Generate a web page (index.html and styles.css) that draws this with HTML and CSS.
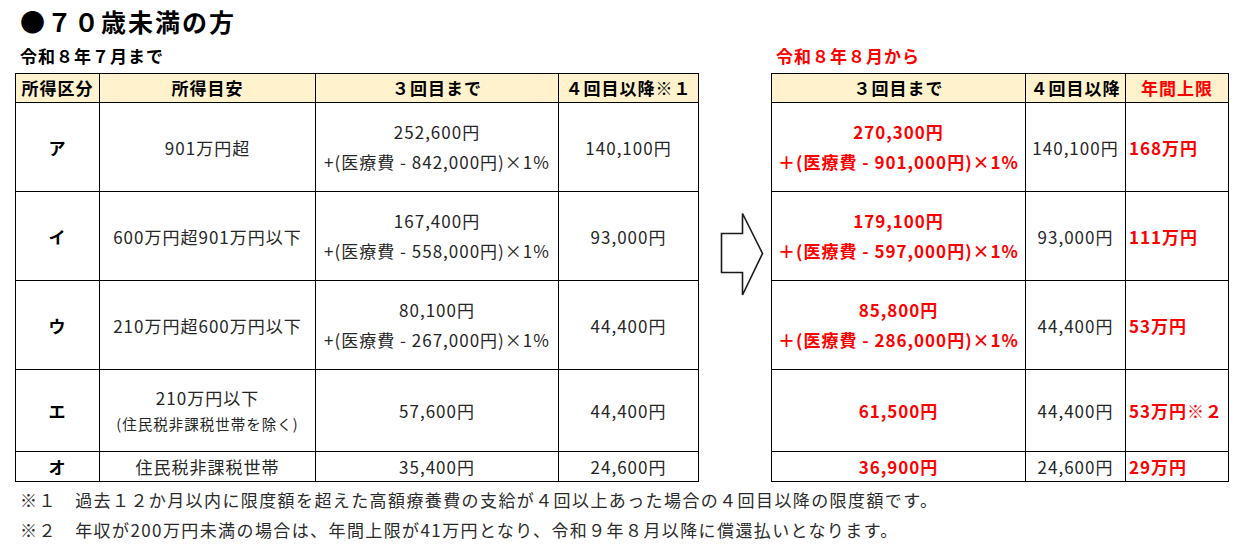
FILE: index.html
```html
<!DOCTYPE html>
<html lang="ja">
<head>
<meta charset="utf-8">
<link rel="stylesheet" href="styles.css">
</head>
<body>
<div class="page">
  <h1 class="title">●７０歳未満の方</h1>
  <div class="compare">
    <section class="block">
      <h2 class="sub">令和８年７月まで</h2>
      <table class="grid left">
        <colgroup><col class="c1"><col class="c2"><col class="c3"><col class="c4"></colgroup>
        <tr class="head"><th>所得区分</th><th>所得目安</th><th>３回目まで</th><th>４回目以降※１</th></tr>
        <tr class="r3"><th>ア</th><td>901万円超</td><td><div class="l2">252,600円</div><div class="l2">+(医療費 - 842,000円)×1%</div></td><td>140,100円</td></tr>
        <tr class="r3"><th>イ</th><td>600万円超901万円以下</td><td><div class="l2">167,400円</div><div class="l2">+(医療費 - 558,000円)×1%</div></td><td>93,000円</td></tr>
        <tr class="r3"><th>ウ</th><td>210万円超600万円以下</td><td><div class="l2">80,100円</div><div class="l2">+(医療費 - 267,000円)×1%</div></td><td>44,400円</td></tr>
        <tr class="r4"><th>エ</th><td><div class="l3">210万円以下</div><div class="l3 small">(住民税非課税世帯を除く)</div></td><td>57,600円</td><td>44,400円</td></tr>
        <tr class="r5"><th>オ</th><td>住民税非課税世帯</td><td>35,400円</td><td>24,600円</td></tr>
      </table>
    </section>
    <div class="arrow">
      <svg width="44" height="85" viewBox="0 0 44 85"><path d="M1.5 21.5 H22.5 V1.5 L42.5 41.5 L22.5 83 V60.5 H1.5 Z" fill="#fff" stroke="#1a1a1a" stroke-width="1.6" stroke-linejoin="miter"/></svg>
    </div>
    <section class="block">
      <h2 class="sub red">令和８年８月から</h2>
      <table class="grid right">
        <colgroup><col class="d1"><col class="d2"><col class="d3"></colgroup>
        <tr class="head"><th>３回目まで</th><th>４回目以降</th><th class="red">年間上限</th></tr>
        <tr class="r3"><td class="rv"><div class="l2">270,300円</div><div class="l2">＋(医療費 - 901,000円)×1%</div></td><td>140,100円</td><td class="cap">168万円</td></tr>
        <tr class="r3"><td class="rv"><div class="l2">179,100円</div><div class="l2">＋(医療費 - 597,000円)×1%</div></td><td>93,000円</td><td class="cap">111万円</td></tr>
        <tr class="r3"><td class="rv"><div class="l2">85,800円</div><div class="l2">＋(医療費 - 286,000円)×1%</div></td><td>44,400円</td><td class="cap">53万円</td></tr>
        <tr class="r4"><td class="rv">61,500円</td><td>44,400円</td><td class="cap">53万円※２</td></tr>
        <tr class="r5"><td class="rv">36,900円</td><td>24,600円</td><td class="cap">29万円</td></tr>
      </table>
    </section>
  </div>
  <div class="notes">
    <p>※１　過去１２か月以内に限度額を超えた高額療養費の支給が４回以上あった場合の４回目以降の限度額です。</p>
    <p>※２　年収が200万円未満の場合は、年間上限が41万円となり、令和９年８月以降に償還払いとなります。</p>
  </div>
</div>
</body>
</html>
```

FILE: styles.css
```css
html, body {
  margin: 0;
  padding: 0;
  background: #fff;
}
body {
  font-family: "Noto Sans CJK JP", "Noto Sans", sans-serif;
  color: #262626;
  font-size: 17px;
  letter-spacing: 1px;
}
.page {
  padding: 4px 0 0 15px;
}
.title {
  margin: 0 0 0 5px;
  font-size: 25px;
  line-height: 34px;
  font-weight: 700;
  color: #000;
  letter-spacing: 2px;
}
.compare {
  display: flex;
  align-items: flex-start;
}
.sub {
  margin: 6px 0 5px 5px;
  font-size: 17px;
  line-height: 24px;
  font-weight: 700;
  color: #000;
}
.sub.red, .grid th.red {
  color: #ff0000;
}
.grid {
  border-collapse: separate;
  border-spacing: 0;
  table-layout: fixed;
  border-top: 1px solid #000;
  border-left: 1px solid #000;
}
.grid.left { width: 684px; }
.grid.right { width: 458px; }
.c1 { width: 84px; }
.c2 { width: 216px; }
.c3 { width: 243px; }
.c4 { width: 140px; }
.d1 { width: 254px; }
.d2 { width: 100px; }
.d3 { width: 103px; }
.grid th, .grid td {
  box-sizing: border-box;
  border-right: 1px solid #000;
  border-bottom: 1px solid #000;
  padding: 0;
  text-align: center;
  vertical-align: middle;
  white-space: nowrap;
  overflow: hidden;
}
.grid th {
  font-weight: 700;
  color: #000;
}
.head th {
  background: #fff2cc;
  height: 29px;
  line-height: 28px;
}
.r3 th, .r3 td { height: 89px; }
.r4 th, .r4 td { height: 82px; }
.r5 th, .r5 td { height: 30px; line-height: 28px; }
.l2 { line-height: 30px; }
.l3 { line-height: 26px; }
.small { font-size: 14.5px; }
.rv {
  color: #ff0000;
  font-weight: 700;
}
.grid td.cap {
  text-align: left;
  padding-left: 3px;
  color: #ff0000;
  font-weight: 700;
}
.arrow {
  width: 72px;
  padding: 174px 0 0 21px;
  box-sizing: border-box;
}
.arrow svg { display: block; }
.notes {
  margin-top: 3px;
  padding-left: 5px;
}
.notes p {
  margin: 0;
  line-height: 30px;
  font-size: 17px;
  letter-spacing: 1.4px;
  color: #2b2b2b;
}
```
